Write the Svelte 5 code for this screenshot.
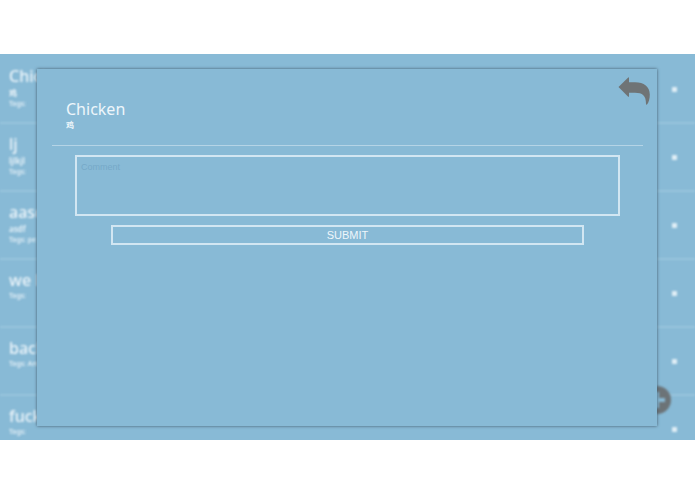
<script>
  const rows = [
    { title: 'Chicken', text: '鸡', tags: 'Tags:' },
    { title: 'lj', text: 'ljlkjl', tags: 'Tags:' },
    { title: 'aasd', text: 'asdf', tags: 'Tags: pe' },
    { title: 'we l', text: '', tags: 'Tags:' },
    { title: 'back', text: '', tags: 'Tags: Ani' },
    { title: 'fuck', text: '', tags: 'Tags:' }
  ];
  let comment = $state('');
</script>

<main>
  <ul class="list">
    {#each rows as row}
      <li>
        <div class="words">
          <div class="title">{row.title}</div>
          {#if row.text}<div class="text">{row.text}</div>{/if}
          <div class="tags">{row.tags}</div>
        </div>
        <span class="mark"></span>
      </li>
    {/each}
  </ul>
  <button class="add" aria-label="Add">
    <svg viewBox="0 0 28 28" width="28" height="28">
      <circle cx="14" cy="14" r="14" fill="#6c7377" />
      <path d="M14 6V22M6 14H22" stroke="#88bad6" stroke-width="4" />
    </svg>
  </button>

  <section class="modal">
    <header>
      <div>
        <h1>Chicken</h1>
        <p>鸡</p>
      </div>
      <button class="back" aria-label="Back">
        <svg viewBox="0 0 32 28" width="32" height="28">
          <path
            d="M0.5 10L10.2 0.4Q11 0 11 1V5.2H17C26 5.2 31.8 9.5 31.8 17.5C31.8 21.5 30.8 25.5 29 27.6Q28.2 28.2 28 27C28 18.5 24.5 15.8 17 15.8H11V19.2Q11 20.2 10.2 19.7Z"
            fill="#6f7476"
          />
        </svg>
      </button>
    </header>
    <form onsubmit={(e) => e.preventDefault()}>
      <textarea aria-label="Comment" placeholder="Comment" bind:value={comment}></textarea>
      <button class="submit">SUBMIT</button>
    </form>
  </section>
</main>

<style>
  :global(body) {
    margin: 0;
    background: #fff;
  }
  main {
    position: relative;
    box-sizing: border-box;
    height: calc(100vh - 108px);
    margin: 54px 0;
    overflow: hidden;
    background: #88bad6;
    color: #eef6fb;
    font-family: 'Noto Sans', 'Noto Sans CJK SC', sans-serif;
  }
  button {
    padding: 0;
    border: 0;
    background: none;
    color: inherit;
    cursor: pointer;
  }
  svg {
    display: block;
  }
  .list {
    margin: 0;
    padding: 2px 0 0;
    list-style: none;
    filter: blur(1px);
  }
  li {
    display: flex;
    align-items: center;
    justify-content: space-between;
    box-sizing: border-box;
    height: 68px;
    padding: 0 18px 0 9px;
    border-bottom: 2px solid #9ac5de;
  }
  .words {
    align-self: flex-start;
    padding-top: 9px;
  }
  .title {
    font-size: 16px;
    line-height: 22px;
    font-weight: 500;
  }
  .text {
    font-size: 8px;
    line-height: 12px;
    font-weight: 600;
  }
  .tags {
    font-size: 7px;
    line-height: 10px;
    font-weight: 500;
  }
  .mark {
    width: 5px;
    height: 5px;
    background: #e0eef6;
  }
  .add {
    position: absolute;
    right: 24px;
    bottom: 26px;
    filter: blur(1px);
  }
  .modal {
    position: absolute;
    inset: 15px 38px 14px 37px;
    box-sizing: border-box;
    padding: 0 14px 0 15px;
    background: #88bad6;
    box-shadow: 0 0 3px #40586a;
  }
  header {
    display: flex;
    justify-content: space-between;
    box-sizing: border-box;
    height: 77px;
    padding: 29px 0 0 14px;
    border-bottom: 1px solid #b5d4e6;
  }
  h1 {
    margin: 0;
    font-size: 16px;
    line-height: 22px;
    font-weight: 400;
  }
  p {
    margin: 0;
    font-size: 8px;
    line-height: 10px;
    font-weight: 600;
  }
  .back {
    position: absolute;
    top: 8px;
    right: 7px;
  }
  form {
    display: flex;
    flex-direction: column;
    gap: 9px;
    padding: 9px 23px;
    font-family: 'Liberation Sans', sans-serif;
  }
  textarea {
    box-sizing: border-box;
    height: 61px;
    padding: 4px;
    border: 2px solid #d2e6f2;
    background: none;
    color: inherit;
    font: 9px/12px 'Liberation Sans', sans-serif;
    resize: none;
  }
  textarea::placeholder {
    color: #76a9c8;
    opacity: 1;
  }
  .submit {
    height: 20px;
    margin: 0 36px;
    border: 2px solid #d2e6f2;
    font: 11px/16px 'Liberation Sans', sans-serif;
  }
</style>
